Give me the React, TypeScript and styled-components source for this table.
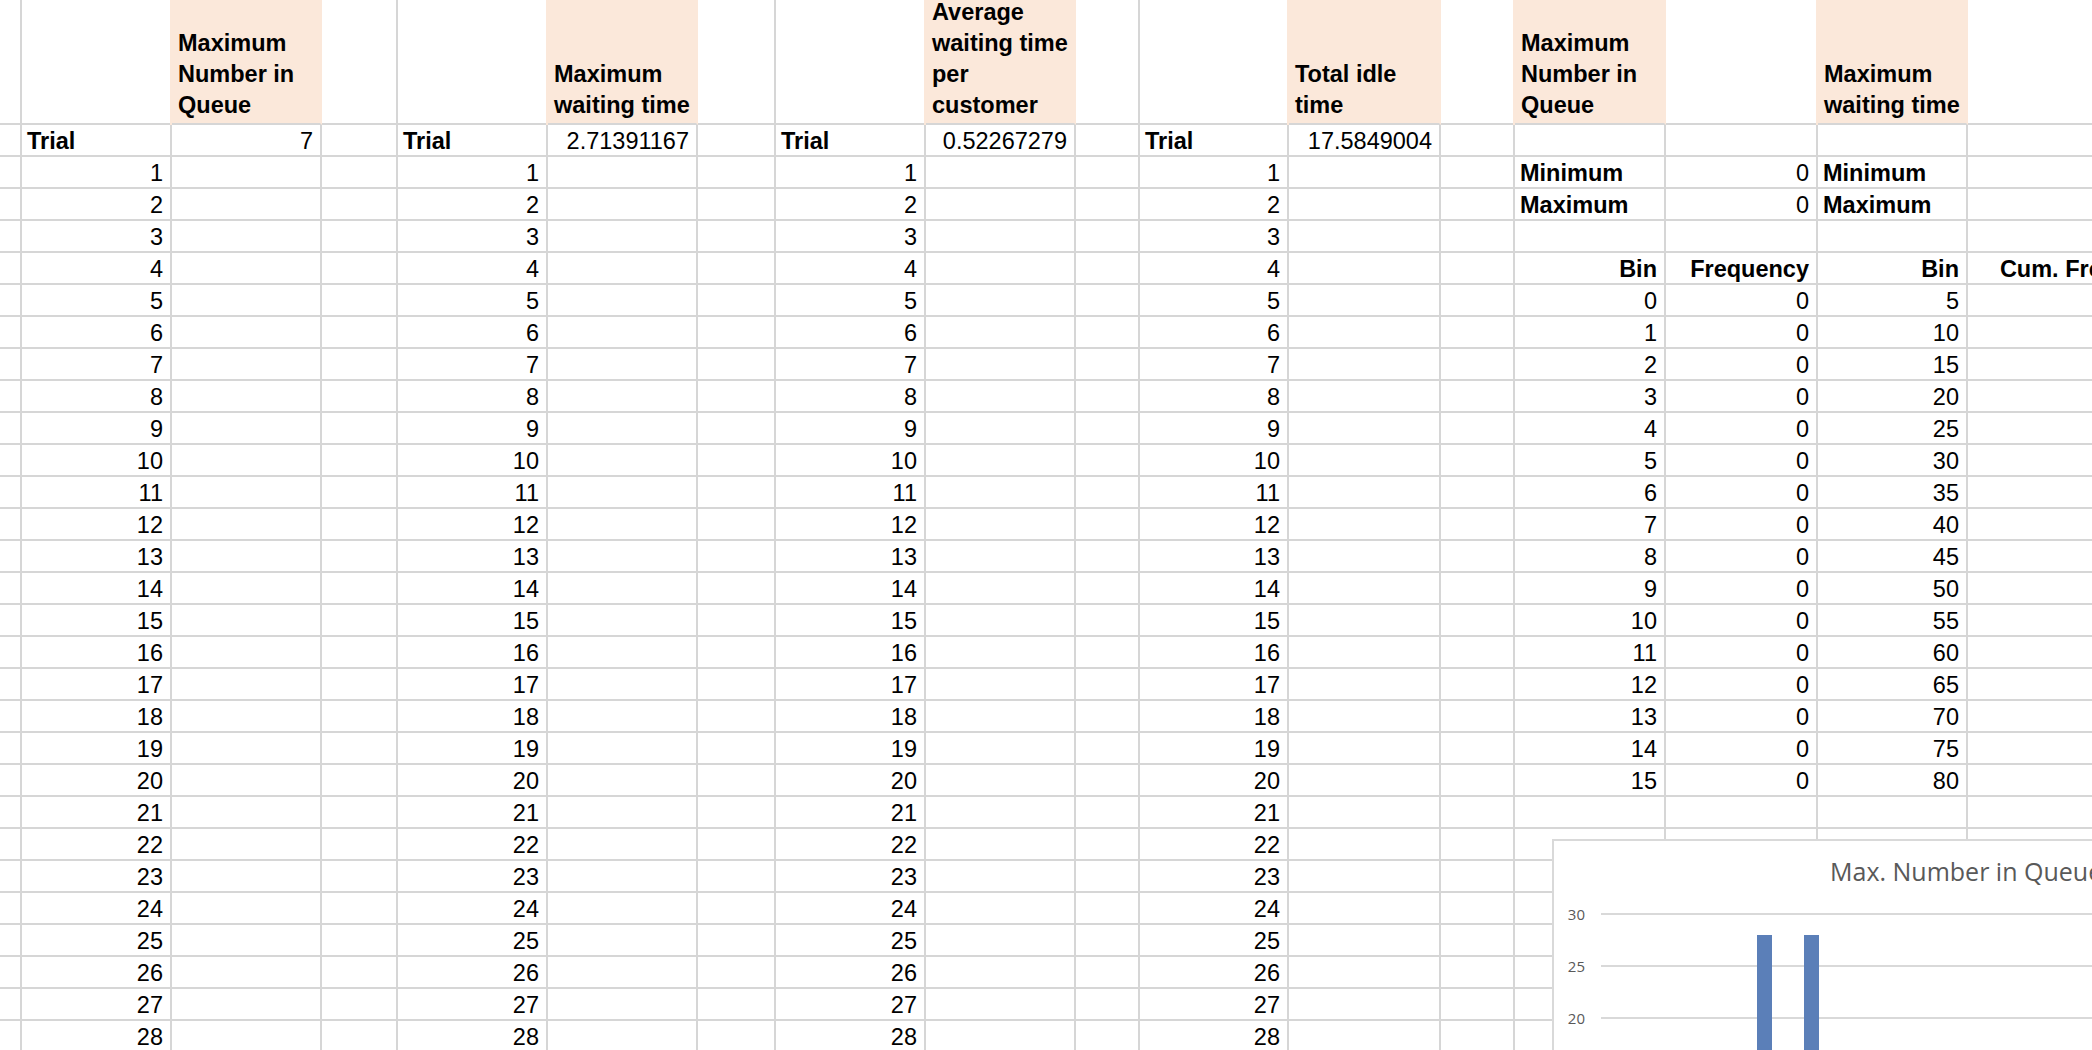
import React from "react";
import styled, { createGlobalStyle } from "styled-components";

const GlobalStyle = createGlobalStyle`
  html, body {
    margin: 0;
    padding: 0;
    background: #fff;
    overflow: hidden;
  }
  body {
    font-family: "Liberation Sans", Arial, sans-serif;
    color: #000;
  }
`;

const LINE = "#d6d6d6";
const PEACH = "#fbe8da";

const COLS = [22, 150, 150, 76, 150, 150, 78, 150, 150, 64, 149, 152, 74, 151, 152, 150, 225];

const HEADERS: (string[] | null)[] = [
  null,
  null,
  ["Maximum", "Number in", "Queue"],
  null,
  null,
  ["Maximum", "waiting time"],
  null,
  null,
  ["Average", "waiting time", "per", "customer"],
  null,
  null,
  ["Total idle", "time"],
  null,
  ["Maximum", "Number in", "Queue"],
  null,
  ["Maximum", "waiting time"],
  null,
];

type CellData = { text?: string; bold?: boolean; right?: boolean };

const ROW_COUNT = 30;

const buildRow = (r: number): CellData[] => {
  const c: CellData[] = COLS.map(() => ({}));
  if (r === 0) {
    c[1] = { text: "Trial", bold: true };
    c[2] = { text: "7", right: true };
    c[4] = { text: "Trial", bold: true };
    c[5] = { text: "2.71391167", right: true };
    c[7] = { text: "Trial", bold: true };
    c[8] = { text: "0.52267279", right: true };
    c[10] = { text: "Trial", bold: true };
    c[11] = { text: "17.5849004", right: true };
  } else {
    [1, 4, 7, 10].forEach((i) => {
      c[i] = { text: String(r), right: true };
    });
  }
  if (r === 1 || r === 2) {
    const label = r === 1 ? "Minimum" : "Maximum";
    c[13] = { text: label, bold: true };
    c[14] = { text: "0", right: true };
    c[15] = { text: label, bold: true };
  }
  if (r === 4) {
    c[13] = { text: "Bin", bold: true, right: true };
    c[14] = { text: "Frequency", bold: true, right: true };
    c[15] = { text: "Bin", bold: true, right: true };
    c[16] = { text: "Cum. Frequency", bold: true, right: true };
  }
  if (r >= 5 && r <= 20) {
    c[13] = { text: String(r - 5), right: true };
    c[14] = { text: "0", right: true };
    c[15] = { text: String((r - 4) * 5), right: true };
  }
  return c;
};

const ROWS = Array.from({ length: ROW_COUNT }, (_, r) => buildRow(r));

const App = () => {
  return (
    <Page>
      <GlobalStyle />
      <Sheet>
        {HEADERS.map((lines, i) => (
          <HeadCell key={`h${i}`} $fill={!!lines}>
            {lines && lines.map((l) => <HeadLine key={l}>{l}</HeadLine>)}
          </HeadCell>
        ))}
        {ROWS.map((row, r) =>
          row.map((cell, i) => (
            <Cell key={`${r}-${i}`} $bold={cell.bold} $right={cell.right}>
              {cell.text}
            </Cell>
          ))
        )}
      </Sheet>

      <Chart>
        <ChartTitle>Max. Number in Queue</ChartTitle>
        <svg width="560" height="170" viewBox="0 0 560 170">
          {[
            { y: 27, label: "30" },
            { y: 79, label: "25" },
            { y: 131, label: "20" },
          ].map((g) => (
            <g key={g.label}>
              <line x1="47" x2="560" y1={g.y} y2={g.y} stroke="#d9d9d9" strokeWidth="2" />
              <text
                x="31"
                y={g.y + 5.5}
                textAnchor="end"
                fontSize="15"
                fill="#595959"
                fontFamily="'Open Sans', sans-serif"
              >
                {g.label}
              </text>
            </g>
          ))}
          <rect x="203" y="48" width="15" height="130" fill="#5b7fb8" />
          <rect x="250" y="48" width="15" height="130" fill="#5b7fb8" />
        </svg>
      </Chart>
    </Page>
  );
};

export default App;

const Page = styled.div`
  position: relative;
  width: 2092px;
  height: 1050px;
  overflow: hidden;
  background: #fff;
`;

const Sheet = styled.div`
  display: grid;
  grid-template-columns: ${COLS.map((w) => `${w}px`).join(" ")};
  grid-template-rows: 125px repeat(${ROW_COUNT}, 32px);
  width: ${COLS.reduce((a, b) => a + b, 0)}px;
`;

const HeadCell = styled.div<{ $fill?: boolean }>`
  box-sizing: border-box;
  display: flex;
  flex-direction: column;
  justify-content: flex-end;
  overflow: hidden;
  padding: 0 4px 2px 6px;
  background: ${(p) => (p.$fill ? PEACH : "#fff")};
  border-right: 2px solid ${(p) => (p.$fill ? PEACH : LINE)};
  border-bottom: 2px solid ${LINE};
  box-shadow: ${(p) => (p.$fill ? `-2px 0 0 ${PEACH}` : "none")};
  font-size: 23.5px;
  font-weight: 700;
  line-height: 31px;
`;

const HeadLine = styled.div`
  white-space: nowrap;
`;

const Cell = styled.div<{ $bold?: boolean; $right?: boolean }>`
  box-sizing: border-box;
  border-right: 2px solid ${LINE};
  border-bottom: 2px solid ${LINE};
  padding: 0 7px 0 5px;
  font-size: 23.5px;
  line-height: 33px;
  white-space: nowrap;
  font-weight: ${(p) => (p.$bold ? 700 : 400)};
  text-align: ${(p) => (p.$right ? "right" : "left")};
`;

const Chart = styled.div`
  position: absolute;
  left: 1552px;
  top: 839px;
  width: 620px;
  height: 260px;
  box-sizing: border-box;
  border: 2px solid #d9d9d9;
  background: #fff;
  font-family: "Open Sans", sans-serif;
  color: #595959;
`;

const ChartTitle = styled.div`
  margin: 14px 0 0 276px;
  font-size: 25px;
  line-height: 32px;
  white-space: nowrap;
`;
